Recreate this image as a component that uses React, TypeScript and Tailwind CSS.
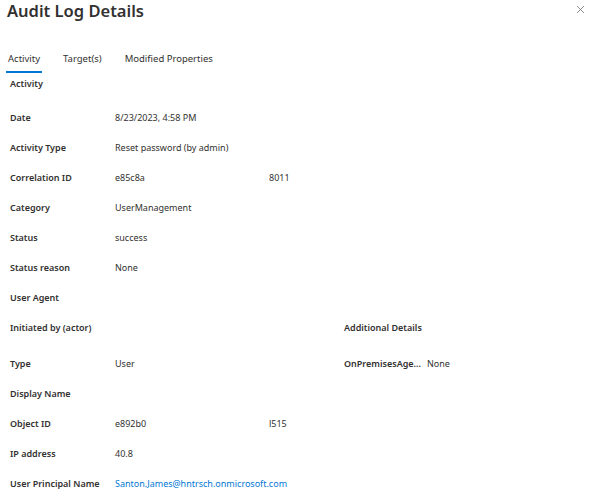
import { X } from 'lucide-react'

type Row = { label: string; value?: string; extra?: string; link?: boolean }

const activityRows: Row[] = [
  { label: 'Date', value: '8/23/2023, 4:58 PM' },
  { label: 'Activity Type', value: 'Reset password (by admin)' },
  { label: 'Correlation ID', value: 'e85c8a', extra: '8011' },
  { label: 'Category', value: 'UserManagement' },
  { label: 'Status', value: 'success' },
  { label: 'Status reason', value: 'None' },
  { label: 'User Agent' },
]

const actorRows: Row[] = [
  { label: 'Type', value: 'User' },
  { label: 'Display Name' },
  { label: 'Object ID', value: 'e892b0', extra: 'l515' },
  { label: 'IP address', value: '40.8' },
  { label: 'User Principal Name', value: 'Santon.James@hntrsch.onmicrosoft.com', link: true },
]

function DetailRow({ row }: { row: Row }) {
  return (
    <div className="flex h-[30px] items-center whitespace-nowrap">
      <span className="w-[105px] shrink-0 font-semibold">{row.label}</span>
      <span className={`w-[154px] shrink-0 ${row.link ? 'text-[#0078d4]' : ''}`}>{row.value}</span>
      {row.extra && <span>{row.extra}</span>}
    </div>
  )
}

export default function App() {
  return (
    <div
      className="h-[500px] w-[596px] overflow-hidden bg-white text-[9px] text-[#323130]"
      style={{ fontFamily: '"Noto Sans", sans-serif' }}
    >
      {/* Header */}
      <div className="flex h-[30px] items-start justify-between pl-[7px] pr-[9px]">
        <h1 className="text-[16.5px] font-semibold leading-[21px]">Audit Log Details</h1>
        <button className="mt-[3px] text-[#605e5c]">
          <X className="h-[13px] w-[13px]" strokeWidth={1.3} />
        </button>
      </div>

      {/* Tabs */}
      <div className="mt-[17px] flex gap-[19px] pl-[6px] text-[9.5px]">
        <div className="flex h-[26px] items-center border-b-2 border-[#0078d4] px-[2px]">Activity</div>
        <div className="flex h-[26px] items-center border-b-2 border-transparent px-[2px]">Target(s)</div>
        <div className="flex h-[26px] items-center border-b-2 border-transparent px-[2px]">
          Modified Properties
        </div>
      </div>

      <div className="pl-[10px]">
        <div className="flex h-[22px] items-center font-semibold">Activity</div>

        <div className="mt-[8px]">
          {activityRows.map((r) => (
            <DetailRow key={r.label} row={r} />
          ))}
        </div>

        <div className="flex">
          <div className="w-[334px] shrink-0">
            <div className="flex h-[30px] items-center font-semibold">Initiated by (actor)</div>
            <div className="mt-[6px]">
              {actorRows.map((r) => (
                <DetailRow key={r.label} row={r} />
              ))}
            </div>
          </div>
          <div>
            <div className="flex h-[30px] items-center font-semibold">Additional Details</div>
            <div className="mt-[6px] flex h-[30px] items-center whitespace-nowrap">
              <span className="w-[83px] shrink-0 font-semibold">OnPremisesAge...</span>
              <span>None</span>
            </div>
          </div>
        </div>
      </div>
    </div>
  )
}
